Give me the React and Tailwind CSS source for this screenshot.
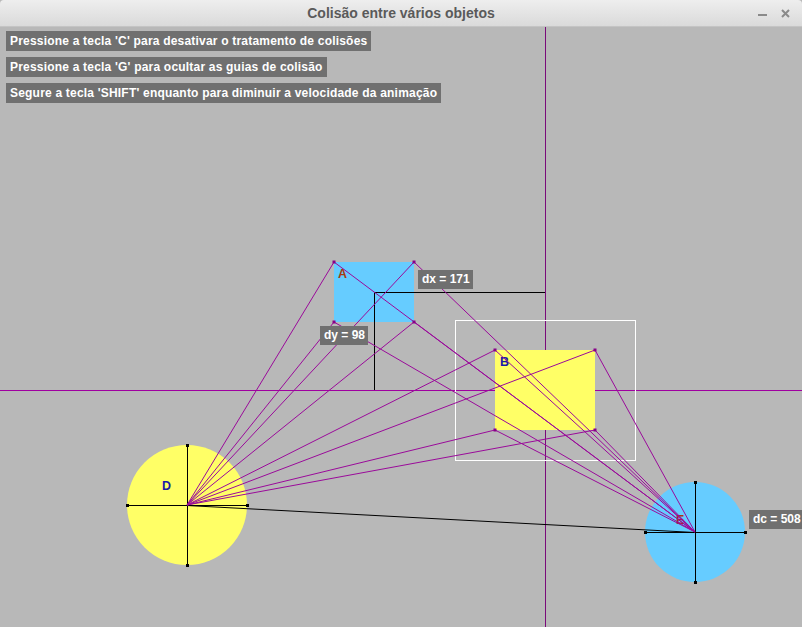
import React from "react";

const A = { x: 334, y: 262, w: 80, h: 60 };
const B = { x: 495, y: 350, w: 100, h: 80 };
const D = { cx: 187, cy: 505, r: 60 };
const E = { cx: 695, cy: 532, r: 50 };

function corners(r) {
  return [
    [r.x, r.y],
    [r.x + r.w, r.y],
    [r.x, r.y + r.h],
    [r.x + r.w, r.y + r.h],
  ];
}

const points = [...corners(A), ...corners(B)];

function Marker({ x, y, color }) {
  return <rect x={x - 1.5} y={y - 1.5} width={3} height={3} fill={color} />;
}

function CircleObj({ c, fill }) {
  const ends = [
    [c.cx - c.r, c.cy],
    [c.cx + c.r, c.cy],
    [c.cx, c.cy - c.r],
    [c.cx, c.cy + c.r],
  ];
  return (
    <g>
      <circle cx={c.cx} cy={c.cy} r={c.r} fill={fill} />
      <line x1={c.cx - c.r} y1={c.cy + 0.5} x2={c.cx + c.r} y2={c.cy + 0.5} stroke="#000" strokeWidth="1" />
      <line x1={c.cx + 0.5} y1={c.cy - c.r} x2={c.cx + 0.5} y2={c.cy + c.r} stroke="#000" strokeWidth="1" />
      {ends.map(([x, y], i) => (
        <Marker key={i} x={x + 0.5} y={y + 0.5} color="#000" />
      ))}
    </g>
  );
}

function Scene() {
  return (
    <svg
      className="absolute inset-0"
      width="802"
      height="600"
      viewBox="0 27 802 600"
    >
      {/* guias */}
      <line x1="545.5" y1="27" x2="545.5" y2="627" stroke="#7a0a7a" strokeWidth="1" />
      <line x1="0" y1="390.5" x2="802" y2="390.5" stroke="#a000a0" strokeWidth="1" />

      {/* objetos */}
      <rect x={455.5} y={320.5} width={180} height={140} fill="none" stroke="#fff" strokeWidth="1" />
      <rect x={A.x} y={A.y} width={A.w} height={A.h} fill="#66ccff" />
      <rect x={B.x} y={B.y} width={B.w} height={B.h} fill="#ffff66" />
      <CircleObj c={D} fill="#ffff66" />
      <CircleObj c={E} fill="#66ccff" />

      <path d="M374.5 390 L374.5 292.5 L545 292.5" fill="none" stroke="#000" strokeWidth="1" />
      <line x1={D.cx} y1={D.cy + 0.5} x2={E.cx} y2={E.cy + 0.5} stroke="#000" strokeWidth="1" />

      <g fontFamily="'Liberation Sans', Arial, sans-serif" fontWeight="bold" fontSize="12.5">
        <text x="338" y="278" fill="#a83a10">A</text>
        <text x="500" y="366" fill="#1a1aa8">B</text>
        <text x="162" y="490" fill="#1a1aa8">D</text>
        <text x="676" y="524" fill="#a83a10">E</text>
      </g>

      {/* linhas de colisão */}
      {points.map(([x, y], i) => (
        <line key={"d" + i} x1={D.cx} y1={D.cy} x2={x} y2={y} stroke="#9a0a9a" strokeWidth="1" />
      ))}
      {points.map(([x, y], i) => (
        <line key={"e" + i} x1={E.cx} y1={E.cy} x2={x} y2={y} stroke="#9a0a9a" strokeWidth="1" />
      ))}
      {points.map(([x, y], i) => (
        <Marker key={"m" + i} x={x} y={y} color="#880088" />
      ))}
    </svg>
  );
}

function Tag({ children, className }) {
  return (
    <div
      className={`absolute h-[19px] bg-[#707070] text-white font-bold text-[12px] leading-[19px] px-1 whitespace-nowrap ${className}`}
    >
      {children}
    </div>
  );
}

const hints = [
  "Pressione a tecla 'C' para desativar o tratamento de colisões",
  "Pressione a tecla 'G' para ocultar as guias de colisão",
  "Segure a tecla 'SHIFT' enquanto para diminuir a velocidade da animação",
];

export default function App() {
  return (
    <div
      className="w-[802px] h-[627px] flex flex-col overflow-hidden bg-[#b8b8b8]"
      style={{ fontFamily: "'Liberation Sans', Arial, sans-serif" }}
    >
      <div className="h-[27px] flex-none flex items-center relative bg-gradient-to-b from-[#eeeeee] to-[#dadada] border-b border-[#c4c4c4] rounded-t-[4px]">
        <div className="flex-1 text-center text-[14px] font-bold text-[#5a5a5a]">
          Colisão entre vários objetos
        </div>
        <div className="absolute right-3 top-0 h-full flex items-center gap-[14px] text-[#8a8a8a]">
          <div className="w-[9px] h-[2px] bg-[#8a8a8a] mt-[4px]" />
          <svg width="9" height="9" viewBox="0 0 9 9">
            <path d="M1 1 L8 8 M8 1 L1 8" stroke="#8a8a8a" strokeWidth="2" />
          </svg>
        </div>
      </div>
      <div className="relative flex-1">
        <Scene />
        <div className="relative flex flex-col items-start gap-[6px] pt-[4px] pl-[6px]">
          {hints.map((h) => (
            <div
              key={h}
              className="h-[20px] bg-[#707070] text-white font-bold text-[12px] tracking-[0.2px] leading-[20px] px-[4px] whitespace-nowrap"
            >
              {h}
            </div>
          ))}
        </div>
        <Tag className="left-[418px] top-[243px] w-[55px]">dx = 171</Tag>
        <Tag className="left-[320px] top-[299px] w-[48px]">dy = 98</Tag>
        <Tag className="left-[749px] top-[483px] w-[53px]">dc = 508</Tag>
      </div>
    </div>
  );
}
